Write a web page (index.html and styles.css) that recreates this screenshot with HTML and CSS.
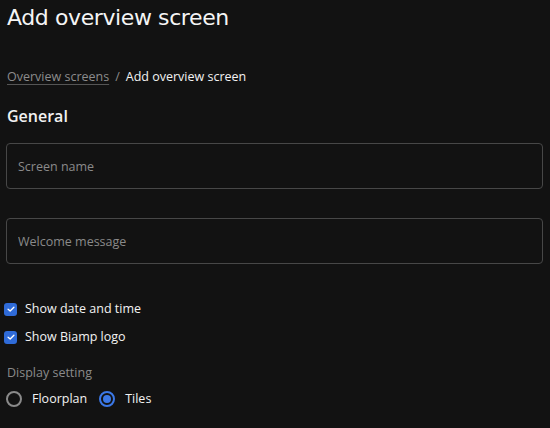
FILE: index.html
```html
<!DOCTYPE html>
<html lang="en">
<head>
<meta charset="utf-8">
<title>Add overview screen</title>
<link rel="stylesheet" href="styles.css">
</head>
<body>
<main class="page">
  <h1 class="title">Add overview screen</h1>
  <nav class="crumbs">
    <a class="crumb-link" href="#">Overview screens</a>
    <span class="crumb-sep">/</span>
    <span class="crumb-current">Add overview screen</span>
  </nav>
  <h2 class="section">General</h2>
  <div class="field"><input class="input" type="text" placeholder="Screen name"></div>
  <div class="field"><input class="input" type="text" placeholder="Welcome message"></div>
  <div class="checks">
    <label class="check"><span class="box"><svg viewBox="0 0 12 12" width="10" height="10"><path d="M2.5 6.2 L5 8.5 L9.5 3.8" fill="none" stroke="#fff" stroke-width="1.6" stroke-linecap="round" stroke-linejoin="round"/></svg></span>Show date and time</label>
    <label class="check"><span class="box"><svg viewBox="0 0 12 12" width="10" height="10"><path d="M2.5 6.2 L5 8.5 L9.5 3.8" fill="none" stroke="#fff" stroke-width="1.6" stroke-linecap="round" stroke-linejoin="round"/></svg></span>Show Biamp logo</label>
  </div>
  <div class="group-label">Display setting</div>
  <div class="radios">
    <label class="radio"><span class="dot"></span>Floorplan</label>
    <label class="radio on"><span class="dot"></span>Tiles</label>
  </div>
</main>
</body>
</html>
```
FILE: styles.css
```css
html, body {
  margin: 0;
  padding: 0;
  background: #121212;
  color: #f2f2f2;
  font-family: "Open Sans", "Noto Sans", sans-serif;
}
.page {
  padding: 0 7px 0 6px;
  display: flex;
  flex-direction: column;
}
.title {
  margin: 4px 0 0 1px;
  font-family: "DejaVu Sans", sans-serif;
  font-weight: 400;
  font-size: 22px;
  line-height: 28px;
  letter-spacing: -0.4px;
  color: #f5f5f5;
}
.crumbs {
  margin: 36px 0 0 1px;
  font-size: 12.5px;
  line-height: 18px;
  display: flex;
  gap: 6px;
}
.crumb-link {
  color: #8c8c8c;
  text-decoration: underline;
  text-decoration-color: #555;
  text-underline-offset: 3px;
}
.crumb-sep { color: #8c8c8c; }
.crumb-current { color: #f2f2f2; }
.section {
  margin: 19px 0 0 1px;
  font-size: 16px;
  font-weight: 600;
  line-height: 22px;
}
.field {
  margin-top: 16px;
}
.field + .field { margin-top: 29px; }
.input {
  box-sizing: border-box;
  width: 537px;
  height: 46px;
  background: #121212;
  border: 1px solid #474747;
  border-radius: 4px;
  padding: 0 11px;
  font-family: "Open Sans", "Noto Sans", sans-serif;
  font-size: 12.5px;
  color: #eee;
  outline: none;
}
.input::placeholder { color: #8a8a8a; }
.checks {
  margin-top: 36px;
  display: flex;
  flex-direction: column;
  gap: 10px;
  margin-left: -2px;
}
.check {
  display: flex;
  align-items: center;
  gap: 8px;
  font-size: 12.5px;
  line-height: 18px;
}
.box {
  width: 13px;
  height: 13px;
  border-radius: 3px;
  background: #2f6bd8;
  display: flex;
  align-items: center;
  justify-content: center;
}
.group-label {
  margin-top: 18px;
  margin-left: 1px;
  font-size: 12.5px;
  line-height: 18px;
  color: #8a8a8a;
}
.radios {
  margin-top: 8px;
  display: flex;
  gap: 12px;
}
.radio {
  display: flex;
  align-items: center;
  gap: 10px;
  font-size: 12.5px;
  line-height: 18px;
}
.dot {
  box-sizing: border-box;
  width: 16px;
  height: 16px;
  border-radius: 50%;
  border: 2px solid #8a8a8a;
  display: flex;
  align-items: center;
  justify-content: center;
}
.radio.on .dot { border-color: #3b78e7; }
.radio.on .dot::after {
  content: "";
  width: 8px;
  height: 8px;
  border-radius: 50%;
  background: #3b78e7;
}
```
